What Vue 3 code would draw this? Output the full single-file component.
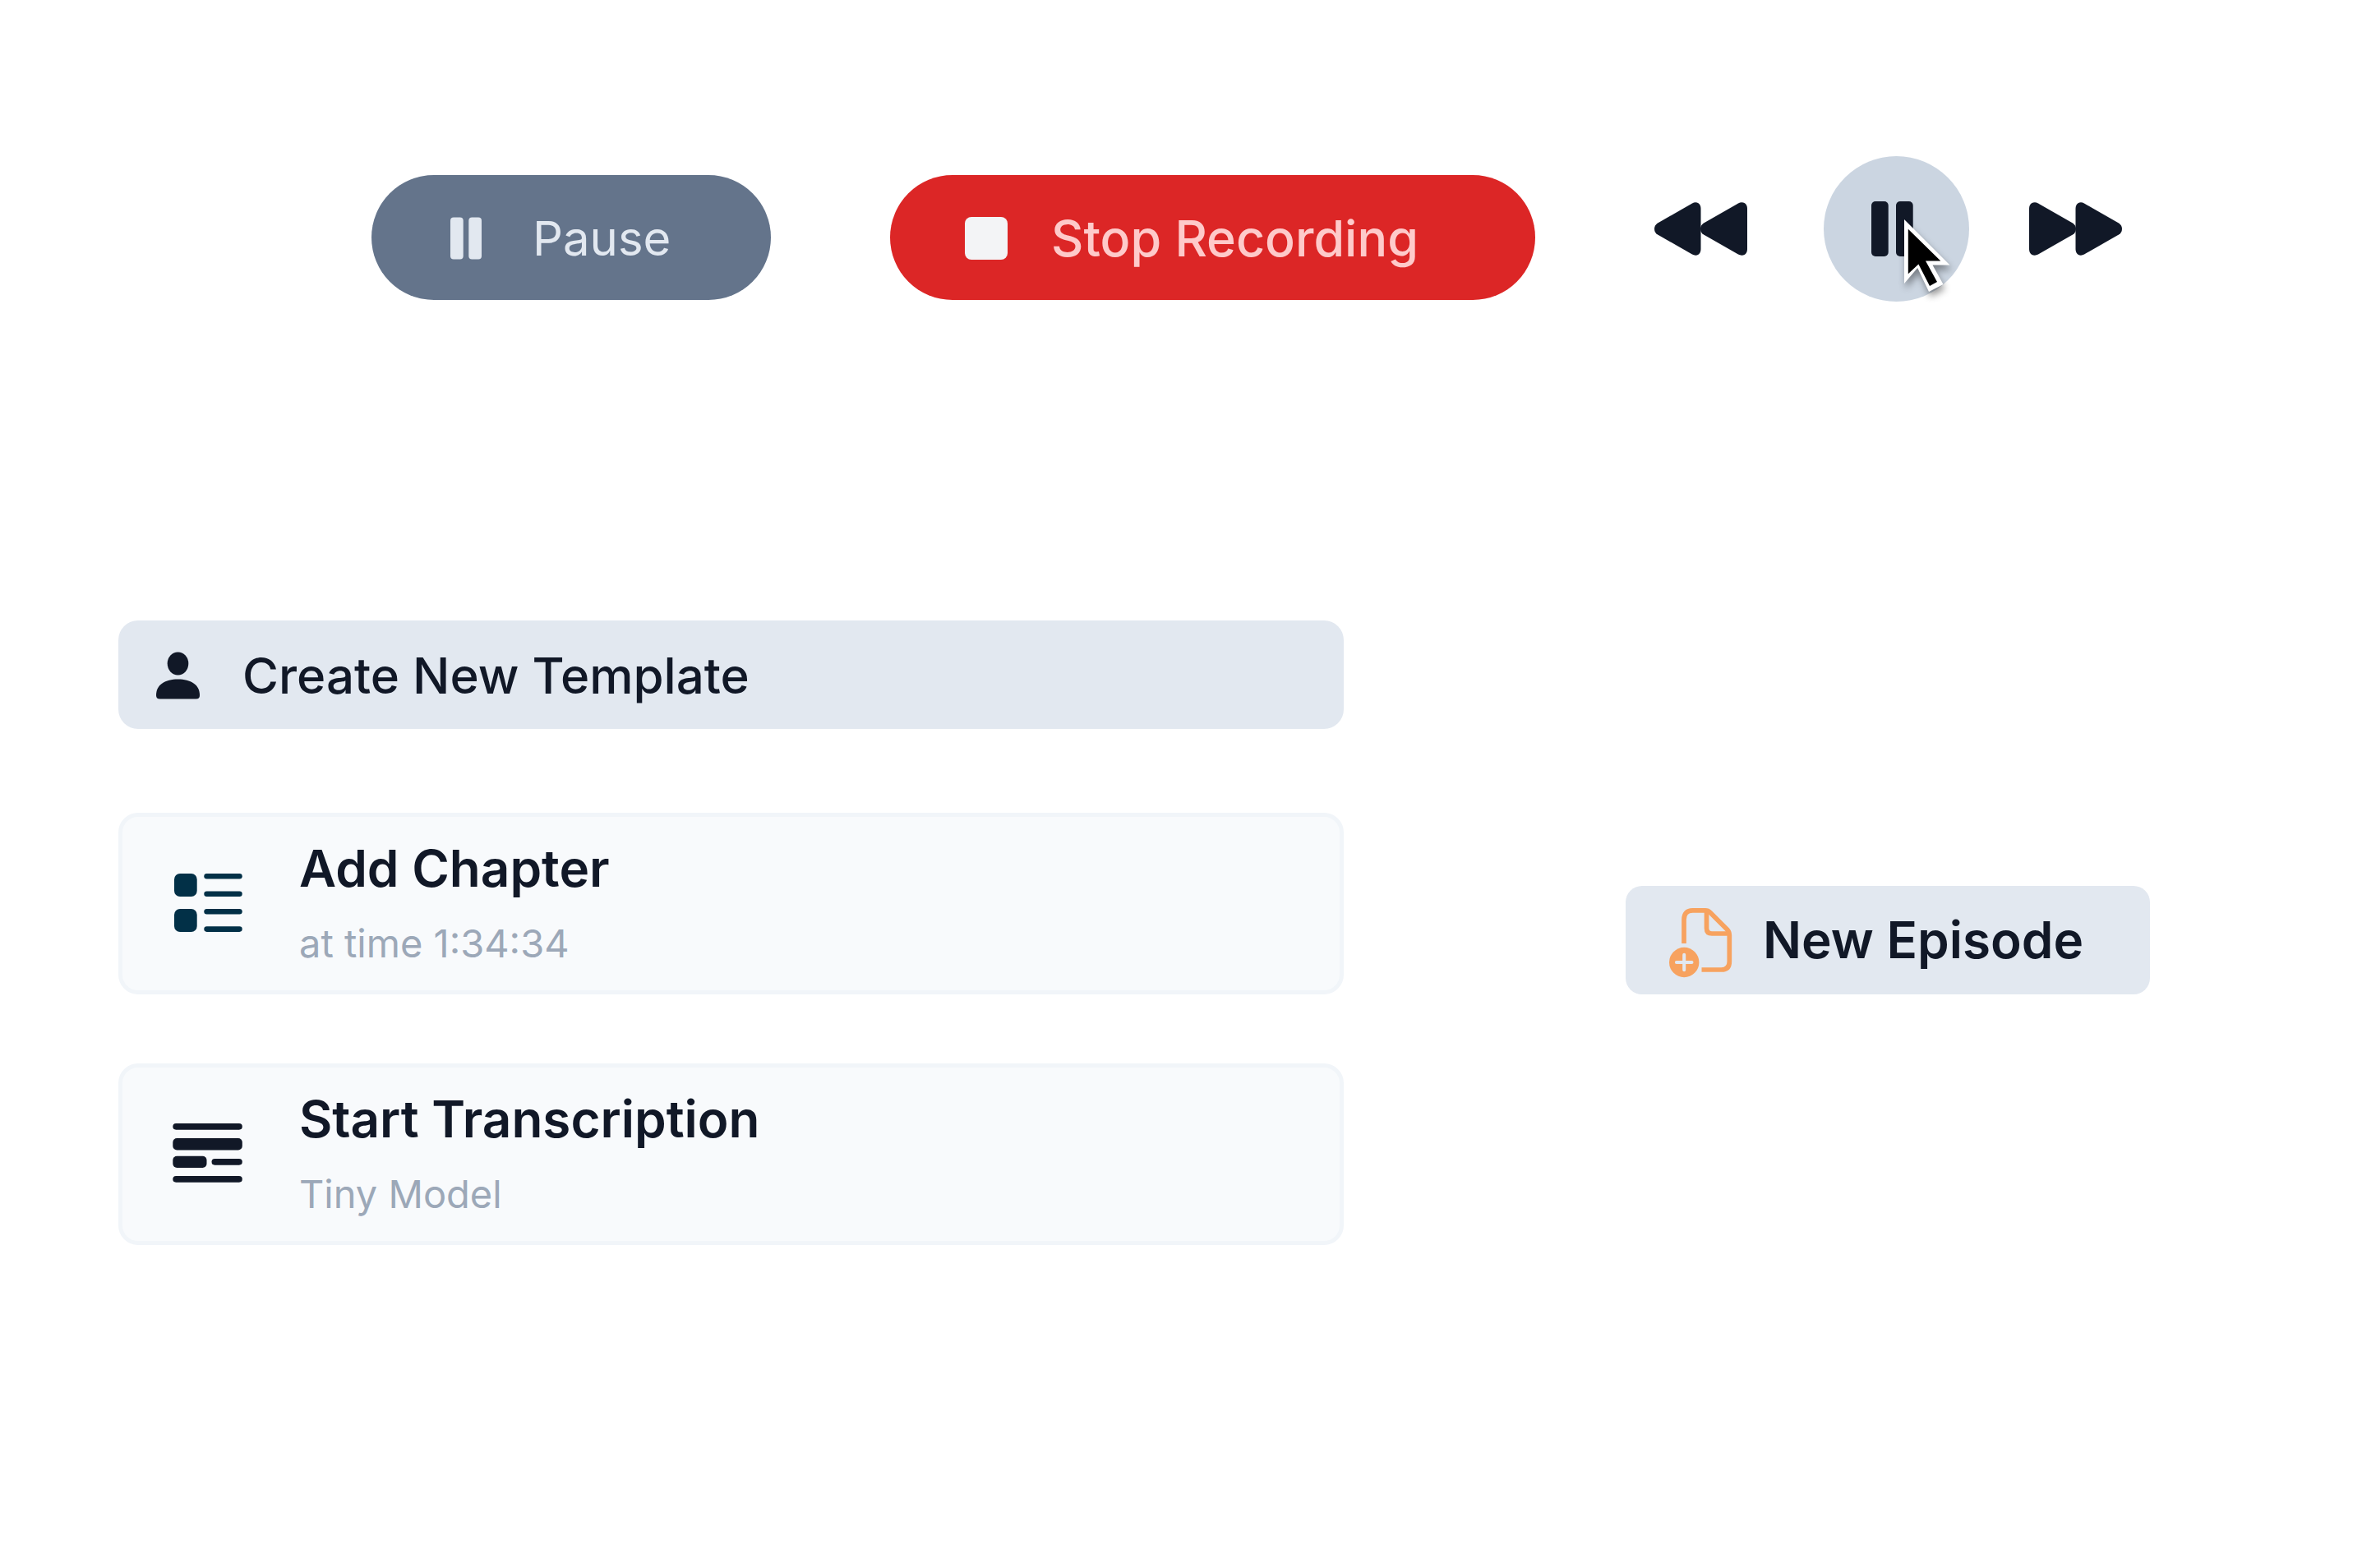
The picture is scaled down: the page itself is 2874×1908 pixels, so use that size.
<script setup>
const cards = [
  { id: 'chapter', title: 'Add Chapter', note: 'at time 1:34:34' },
  { id: 'transcription', title: 'Start Transcription', note: 'Tiny Model' },
]
</script>

<template>
  <main class="page">
    <section class="toolbar" aria-label="Recording and playback">
      <button type="button" class="pill pill-pause">
        <svg width="52" height="52" viewBox="0 0 52 52" fill="currentColor" aria-hidden="true">
          <rect x="0" y="0.5" width="15.7" height="51" rx="4" />
          <rect x="22.3" y="0.5" width="15.7" height="51" rx="4" />
        </svg>
        <span>Pause</span>
      </button>
      <button type="button" class="pill pill-stop">
        <svg width="52" height="52" viewBox="0 0 52 52" fill="#f3f4f6" aria-hidden="true">
          <rect width="52" height="52" rx="8" />
        </svg>
        <span>Stop Recording</span>
      </button>

      <div class="player">
        <button type="button" aria-label="Rewind">
          <svg width="113" height="65" viewBox="0 0 113 65" fill="currentColor" aria-hidden="true">
            <path d="M4 25.500 46 1.500Q50-.7 53.500 1.300Q56.500 3.500 56.500 8V57Q56.500 61.500 53.500 63.700Q50 65.700 46 63.500L4 39.500Q0 37 0 32.500T4 25.500Z" />
            <path d="M60 25.500 102 1.500Q106-.7 110 1.300Q113 3.500 113 8V57Q113 61.500 110 63.700Q106 65.700 102 63.500L60 39.500Q56 37 56 32.500T60 25.500Z" />
          </svg>
        </button>
        <button type="button" class="play" aria-label="Pause playback">
          <svg width="52" height="67" viewBox="0 0 52 67" fill="currentColor" aria-hidden="true">
            <rect x="0" y="0" width="20.700" height="67" rx="5" />
            <rect x="30" y="0" width="20.700" height="67" rx="5" />
          </svg>
          <svg class="cursor" width="76" height="108" viewBox="0 0 76 108" aria-hidden="true">
            <path fill="#fff" d="M0 0 55.500 55.500H34.500L47.500 79 30 88 16.200 59 0 78Z" />
            <path fill="#000" d="M4.800 11.700 44.300 50.500H26L40 76 31 81 17.400 54.500 4.800 66.200Z" />
          </svg>
        </button>
        <button type="button" aria-label="Fast forward">
          <svg width="113" height="65" viewBox="0 0 113 65" fill="currentColor" aria-hidden="true">
            <g transform="matrix(-1 0 0 1 113 0)">
              <path d="M4 25.500 46 1.500Q50-.7 53.500 1.300Q56.500 3.500 56.500 8V57Q56.500 61.500 53.500 63.700Q50 65.700 46 63.500L4 39.500Q0 37 0 32.500T4 25.500Z" />
              <path d="M60 25.500 102 1.500Q106-.7 110 1.300Q113 3.500 113 8V57Q113 61.500 110 63.700Q106 65.700 102 63.500L60 39.500Q56 37 56 32.500T60 25.500Z" />
            </g>
          </svg>
        </button>
      </div>
    </section>

    <section class="actions" aria-label="Actions">
      <button type="button" class="template">
        <svg width="54" height="58" viewBox="0 0 54 58" fill="#111827" aria-hidden="true">
          <ellipse cx="26.500" cy="14.500" rx="12.800" ry="14" />
          <path d="M0 53C0 40 11 33.500 26.500 33.500S53 40 53 53Q53 57.500 48.500 57.500H4.500Q0 57.500 0 53Z" />
        </svg>
        <span>Create New Template</span>
      </button>

      <button v-for="card in cards" :key="card.id" type="button" class="card">
        <svg v-if="card.id === 'chapter'" width="86" height="74" viewBox="0 0 86 74" fill="#023047" aria-hidden="true">
          <rect x="2" y="1" width="27.700" height="28" rx="7" />
          <rect x="2" y="44" width="27.700" height="28" rx="7" />
          <rect x="38.300" y="1" width="46.400" height="6.600" rx="3.300" />
          <rect x="38.300" y="22.500" width="46.400" height="6.600" rx="3.300" />
          <rect x="38.300" y="44" width="46.400" height="6.600" rx="3.300" />
          <rect x="38.300" y="65.300" width="46.400" height="6.600" rx="3.300" />
        </svg>
        <svg v-else width="86" height="74" viewBox="0 0 86 74" fill="#111827" aria-hidden="true">
          <rect x="0.300" y="0" width="84.500" height="7.700" rx="3.850" />
          <rect x="0.300" y="18" width="84.500" height="14.500" rx="5" />
          <rect x="0.300" y="39.700" width="41.200" height="14.300" rx="5" />
          <rect x="47.500" y="43" width="37.300" height="7.700" rx="3.850" />
          <rect x="0.300" y="64" width="84.500" height="7.700" rx="3.850" />
        </svg>
        <span class="card-text">
          <span class="card-title">{{ card.title }}</span>
          <span class="card-note">{{ card.note }}</span>
        </span>
      </button>

      <button type="button" class="episode">
        <svg width="78" height="92" viewBox="0 -6 78 92" fill="none" aria-hidden="true">
          <g stroke="#f7a25f" stroke-width="5.700" stroke-linejoin="round">
            <path d="M18 44V15Q18 3.900 28.500 3.900H44Q47.500 3.900 50 6.500L70.500 27Q73.300 30 73.300 34V66Q73.300 76 63.500 76H39.500" />
            <path d="M45.500 4.500V25.500Q45.500 32 52 32H73" />
          </g>
          <circle cx="18.200" cy="67" r="18.200" fill="#f7a25f" />
          <path d="M18.200 57.700V76.300M8.900 67H27.500" stroke="#e2e8f0" stroke-width="4" stroke-linecap="round" />
        </svg>
        <span>New Episode</span>
      </button>
    </section>
  </main>
</template>

<style>
body {
  margin: 0;
  background: #fff;
}
</style>

<style scoped>
.page {
  box-sizing: border-box;
  padding: 190px 144px 120px;
  color: #111827;
  font-family: Inter, "Noto Sans", sans-serif;
}

button {
  box-sizing: border-box;
  margin: 0;
  padding: 0;
  border: 0;
  background: none;
  color: inherit;
  font: inherit;
  text-align: left;
  cursor: pointer;
}

svg {
  display: block;
  flex: none;
}

span {
  white-space: nowrap;
}

.toolbar {
  display: flex;
  align-items: flex-start;
  gap: 145px;
  padding-left: 308px;
}

.pill {
  display: flex;
  align-items: center;
  margin-top: 23px;
  height: 152px;
  padding-top: 2px;
  border-radius: 76px;
  font-size: 61px;
  line-height: 76px;
}

.pill-pause {
  width: 486px;
  gap: 48px;
  padding-left: 96px;
  background: #64748b;
  color: #e2e8f0;
  font-size: 58px;
}

.pill-stop {
  width: 785px;
  gap: 53px;
  padding-left: 91px;
  background: #dc2626;
  color: #fecaca;
  font-weight: 500;
}

.player {
  display: flex;
  align-items: center;
}

.play {
  position: relative;
  display: flex;
  align-items: center;
  width: 177px;
  height: 177px;
  margin: 0 73px 0 93px;
  padding-left: 58px;
  border-radius: 50%;
  background: #cbd5e1;
}

.cursor {
  position: absolute;
  top: 77px;
  left: 98px;
  overflow: visible;
  filter: drop-shadow(2px 6px 4px rgba(0, 0, 0, 0.4));
}

.actions {
  display: grid;
  grid-template-columns: 1fr auto;
  column-gap: 343px;
  row-gap: 84px;
  margin-top: 388px;
  padding-right: 114px;
}

.template {
  display: flex;
  align-items: center;
  grid-column: 1;
  gap: 51px;
  height: 132px;
  margin-bottom: 18px;
  padding: 2px 0 0 46px;
  border-radius: 24px;
  background: #e2e8f0;
  font-size: 60px;
  font-weight: 500;
  line-height: 76px;
}

.card {
  display: flex;
  align-items: center;
  grid-column: 1;
  gap: 68px;
  height: 221px;
  padding: 0 0 2px 61px;
  border: 5px solid #f1f5f9;
  border-radius: 24px;
  background: #f8fafc;
}

.card-text {
  display: flex;
  flex-direction: column;
  gap: 23px;
}

.card-title {
  font-size: 62px;
  font-weight: 600;
  line-height: 76px;
}

.card-note {
  color: #9ca8b8;
  font-size: 47px;
  line-height: 60px;
}

.episode {
  display: flex;
  align-items: center;
  align-self: end;
  grid-row: 2;
  grid-column: 2;
  gap: 36px;
  width: 638px;
  height: 132px;
  padding-left: 53px;
  border-radius: 20px;
  background: #e2e8f0;
  font-size: 62px;
  font-weight: 600;
  line-height: 76px;
}
</style>
